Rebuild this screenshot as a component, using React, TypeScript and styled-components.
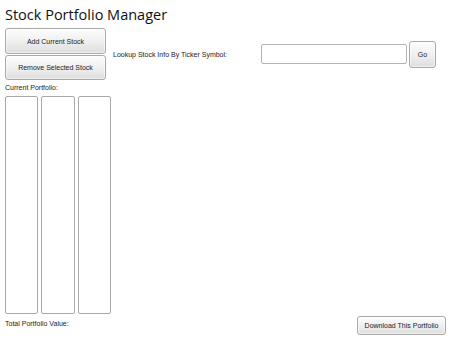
import styled, { createGlobalStyle } from 'styled-components'

const GlobalStyle = createGlobalStyle`
    html, body {
        margin: 0;
        padding: 0;
        background: #fff;
    }

    body {
        font-family: "Liberation Sans", Arial, sans-serif;
        color: #1a1a1a;
    }
`

function App() {
  return (
    <Page>
        <GlobalStyle />
        <Title>Stock Portfolio Manager</Title>
        <TopRow>
            <ButtonColumn>
                <Button $height={26}>Add Current Stock</Button>
                <Button $height={25}>Remove Selected Stock</Button>
            </ButtonColumn>
            <Label>Lookup Stock Info By Ticker Symbol:</Label>
            <Lookup>
                <TickerInput type="text" />
                <GoButton>Go</GoButton>
            </Lookup>
        </TopRow>
        <SectionLabel>Current Portfolio:</SectionLabel>
        <Lists>
            <ListBox />
            <ListBox />
            <ListBox />
        </Lists>
        <BottomRow>
            <SectionLabel>Total Portfolio Value:</SectionLabel>
            <DownloadButton>Download This Portfolio</DownloadButton>
        </BottomRow>
    </Page>
  )
}

const Page = styled.div`
    width: 454px;
    height: 342px;
    box-sizing: border-box;
    padding: 5px 8px 7px 5px;

    display: flex;
    flex-direction: column;
`

const Title = styled.h1`
    margin: 0;
    font-family: "Open Sans", sans-serif;
    font-size: 14.5px;
    font-weight: 400;
    line-height: 20px;
    color: #111;
`

// Top controls

const TopRow = styled.div`
    margin-top: 3px;
    display: flex;
    flex-direction: row;
    align-items: center;
`

const ButtonColumn = styled.div`
    display: flex;
    flex-direction: column;
    gap: 1px;
`

const Button = styled.button<{ $height: number }>`
    width: 101px;
    height: ${p => p.$height}px;
    padding: 0;

    border: 1px solid #a9a9a9;
    border-radius: 3px;
    background: linear-gradient(180deg, #fdfdfd 0%, #f0f0f0 50%, #dedede 100%);
    box-shadow: inset 0 0 0 1px #ffffff80;

    font-family: "Liberation Sans", Arial, sans-serif;
    font-size: 7px;
    color: #222;
`

const Label = styled.span`
    flex: 1;
    margin-left: 7px;
    font-size: 7px;
    color: #222;
`

const Lookup = styled.div`
    margin-right: 10px;
    display: flex;
    flex-direction: row;
    align-items: center;
    gap: 2px;
`

const TickerInput = styled.input`
    width: 146px;
    height: 20px;
    box-sizing: border-box;
    margin: 0;

    border: 1px solid #b4b4b4;
    border-radius: 2px;
    background: #fff;
`

const GoButton = styled(Button).attrs({ $height: 27 })`
    width: 27px;
`

// Portfolio lists

const SectionLabel = styled.div`
    margin-top: 3px;
    font-size: 7px;
    line-height: 9px;
    color: #222;
`

const Lists = styled.div`
    flex: 1;
    margin-top: 4px;
    width: 106px;

    display: grid;
    grid-template-columns: repeat(3, 1fr);
    gap: 3px;
`

const ListBox = styled.div`
    border: 1px solid #a9a9a9;
    border-radius: 2px;
    background: #fff;
`

const BottomRow = styled.div`
    margin-top: 2px;
    display: flex;
    flex-direction: row;
    justify-content: space-between;
    align-items: flex-start;
`

const DownloadButton = styled(Button).attrs({ $height: 19 })`
    width: 89px;
`

export default App
